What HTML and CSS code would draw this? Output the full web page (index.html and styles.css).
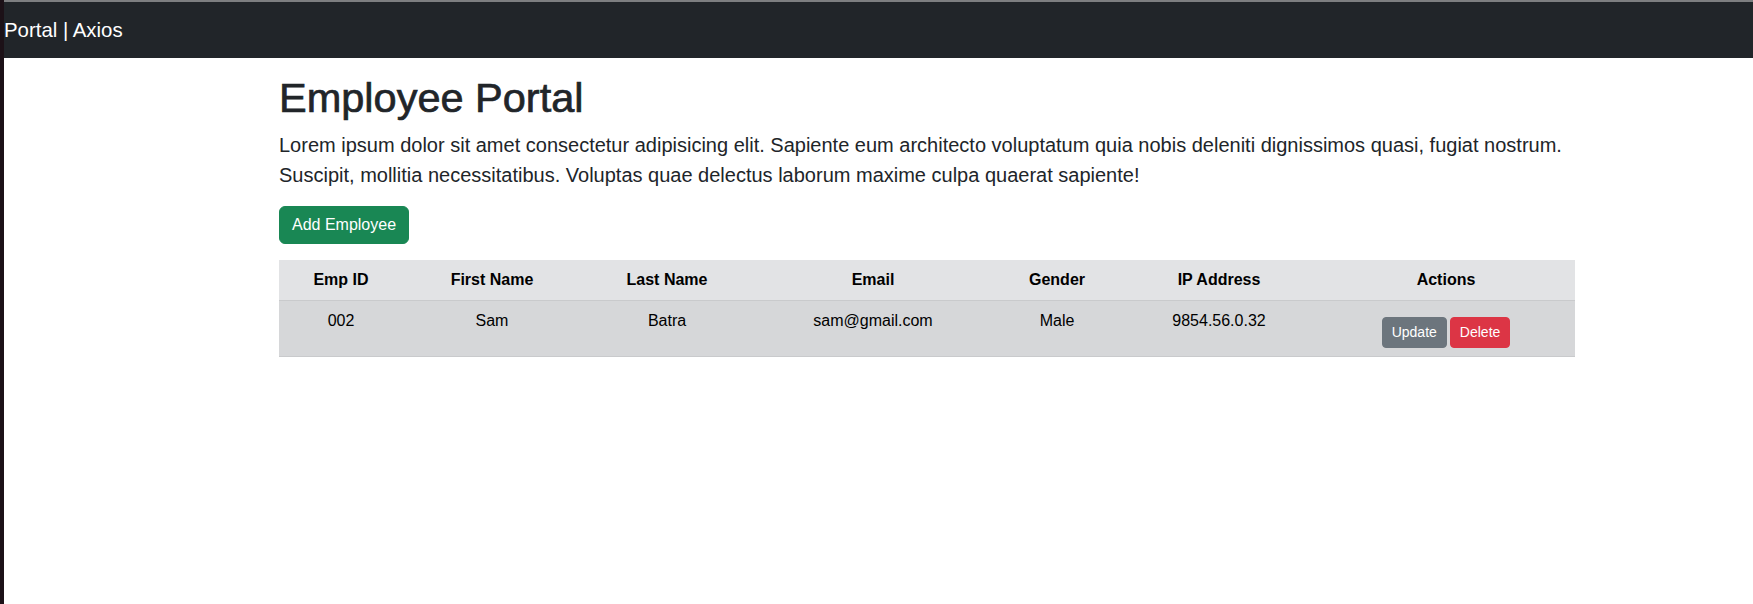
FILE: index.html
```html
<!DOCTYPE html>
<html lang="en">
<head>
<meta charset="utf-8">
<title>Portal | Axios</title>
<link rel="stylesheet" href="styles.css">
</head>
<body>
<div class="frame">
  <div class="edge"></div>
  <div class="page">
    <nav class="navbar">
      <span class="brand">Portal | Axios</span>
    </nav>
    <main class="container">
      <h1 class="title">Employee Portal</h1>
      <p class="lead">Lorem ipsum dolor sit amet consectetur adipisicing elit. Sapiente eum architecto voluptatum quia nobis deleniti dignissimos quasi, fugiat nostrum. Suscipit, mollitia necessitatibus. Voluptas quae delectus laborum maxime culpa quaerat sapiente!</p>
      <button class="btn btn-success" type="button">Add Employee</button>
      <table class="emp-table">
        <colgroup>
          <col class="c-id">
          <col class="c-first">
          <col class="c-last">
          <col class="c-email">
          <col class="c-gender">
          <col class="c-ip">
          <col class="c-actions">
        </colgroup>
        <thead>
          <tr>
            <th>Emp ID</th>
            <th>First Name</th>
            <th>Last Name</th>
            <th>Email</th>
            <th>Gender</th>
            <th>IP Address</th>
            <th>Actions</th>
          </tr>
        </thead>
        <tbody>
          <tr>
            <td>002</td>
            <td>Sam</td>
            <td>Batra</td>
            <td>sam@gmail.com</td>
            <td>Male</td>
            <td>9854.56.0.32</td>
            <td>
              <div class="actions">
                <button class="btn-sm btn-secondary" type="button">Update</button>
                <button class="btn-sm btn-danger" type="button">Delete</button>
              </div>
            </td>
          </tr>
        </tbody>
      </table>
    </main>
  </div>
</div>
</body>
</html>
```

FILE: styles.css
```css
* { box-sizing: border-box; }

html, body {
  margin: 0;
  padding: 0;
  background: #ffffff;
}

body {
  font-family: "Liberation Sans", Arial, sans-serif;
  font-size: 16px;
  line-height: 1.5;
  color: #212529;
}

.frame {
  display: flex;
  min-height: 100vh;
}

.edge {
  width: 4px;
  flex: 0 0 4px;
  background: #1c1117;
}

.page {
  flex: 1;
  min-width: 0;
}

.navbar {
  border-top: 2px solid #7d7e80;
  background: #212529;
  padding: 8px 0;
  display: flex;
  align-items: center;
}

.brand {
  color: #ffffff;
  font-size: 20.4px;
  line-height: 30px;
  padding: 5px 0;
}

.container {
  width: 1296px;
  margin-left: 275px;
  padding-top: 16px;
}

.title {
  margin: 0 0 8px;
  font-size: 41.5px;
  font-weight: 400;
  line-height: 48px;
  color: #212529;
  -webkit-text-stroke: 0.7px #212529;
}

.lead {
  margin: 0 0 16px;
  font-size: 20px;
  font-weight: 300;
  line-height: 30px;
  color: #212529;
}

.btn {
  display: inline-block;
  font-family: inherit;
  font-size: 16px;
  line-height: 24px;
  padding: 6px 12px;
  border: 1px solid transparent;
  border-radius: 6px;
  color: #ffffff;
  cursor: pointer;
}

.btn-success {
  background: #198754;
  border-color: #198754;
}

.emp-table {
  margin-top: 16px;
  width: 100%;
  table-layout: fixed;
  border-collapse: collapse;
  color: #000000;
}

.c-id { width: 124px; }
.c-first { width: 178px; }
.c-last { width: 172px; }
.c-email { width: 240px; }
.c-gender { width: 128px; }
.c-ip { width: 196px; }
.c-actions { width: 258px; }

.emp-table th,
.emp-table td {
  padding: 8px;
  text-align: center;
  vertical-align: top;
  line-height: 24px;
  border-bottom: 1px solid #c9cacc;
}

.emp-table thead tr {
  background: #e2e3e5;
}

.emp-table th {
  font-weight: 700;
}

.emp-table tbody tr {
  background: #d6d7d9;
}

.actions {
  display: flex;
  justify-content: center;
  gap: 3px;
  margin-top: 8px;
}

.btn-sm {
  font-family: inherit;
  font-size: 14px;
  line-height: 21px;
  padding: 4px 9px;
  border: 1px solid transparent;
  border-radius: 4px;
  color: #ffffff;
  cursor: pointer;
}

.btn-secondary {
  background: #6c757d;
  border-color: #6c757d;
}

.btn-danger {
  background: #dc3545;
  border-color: #dc3545;
}
```
